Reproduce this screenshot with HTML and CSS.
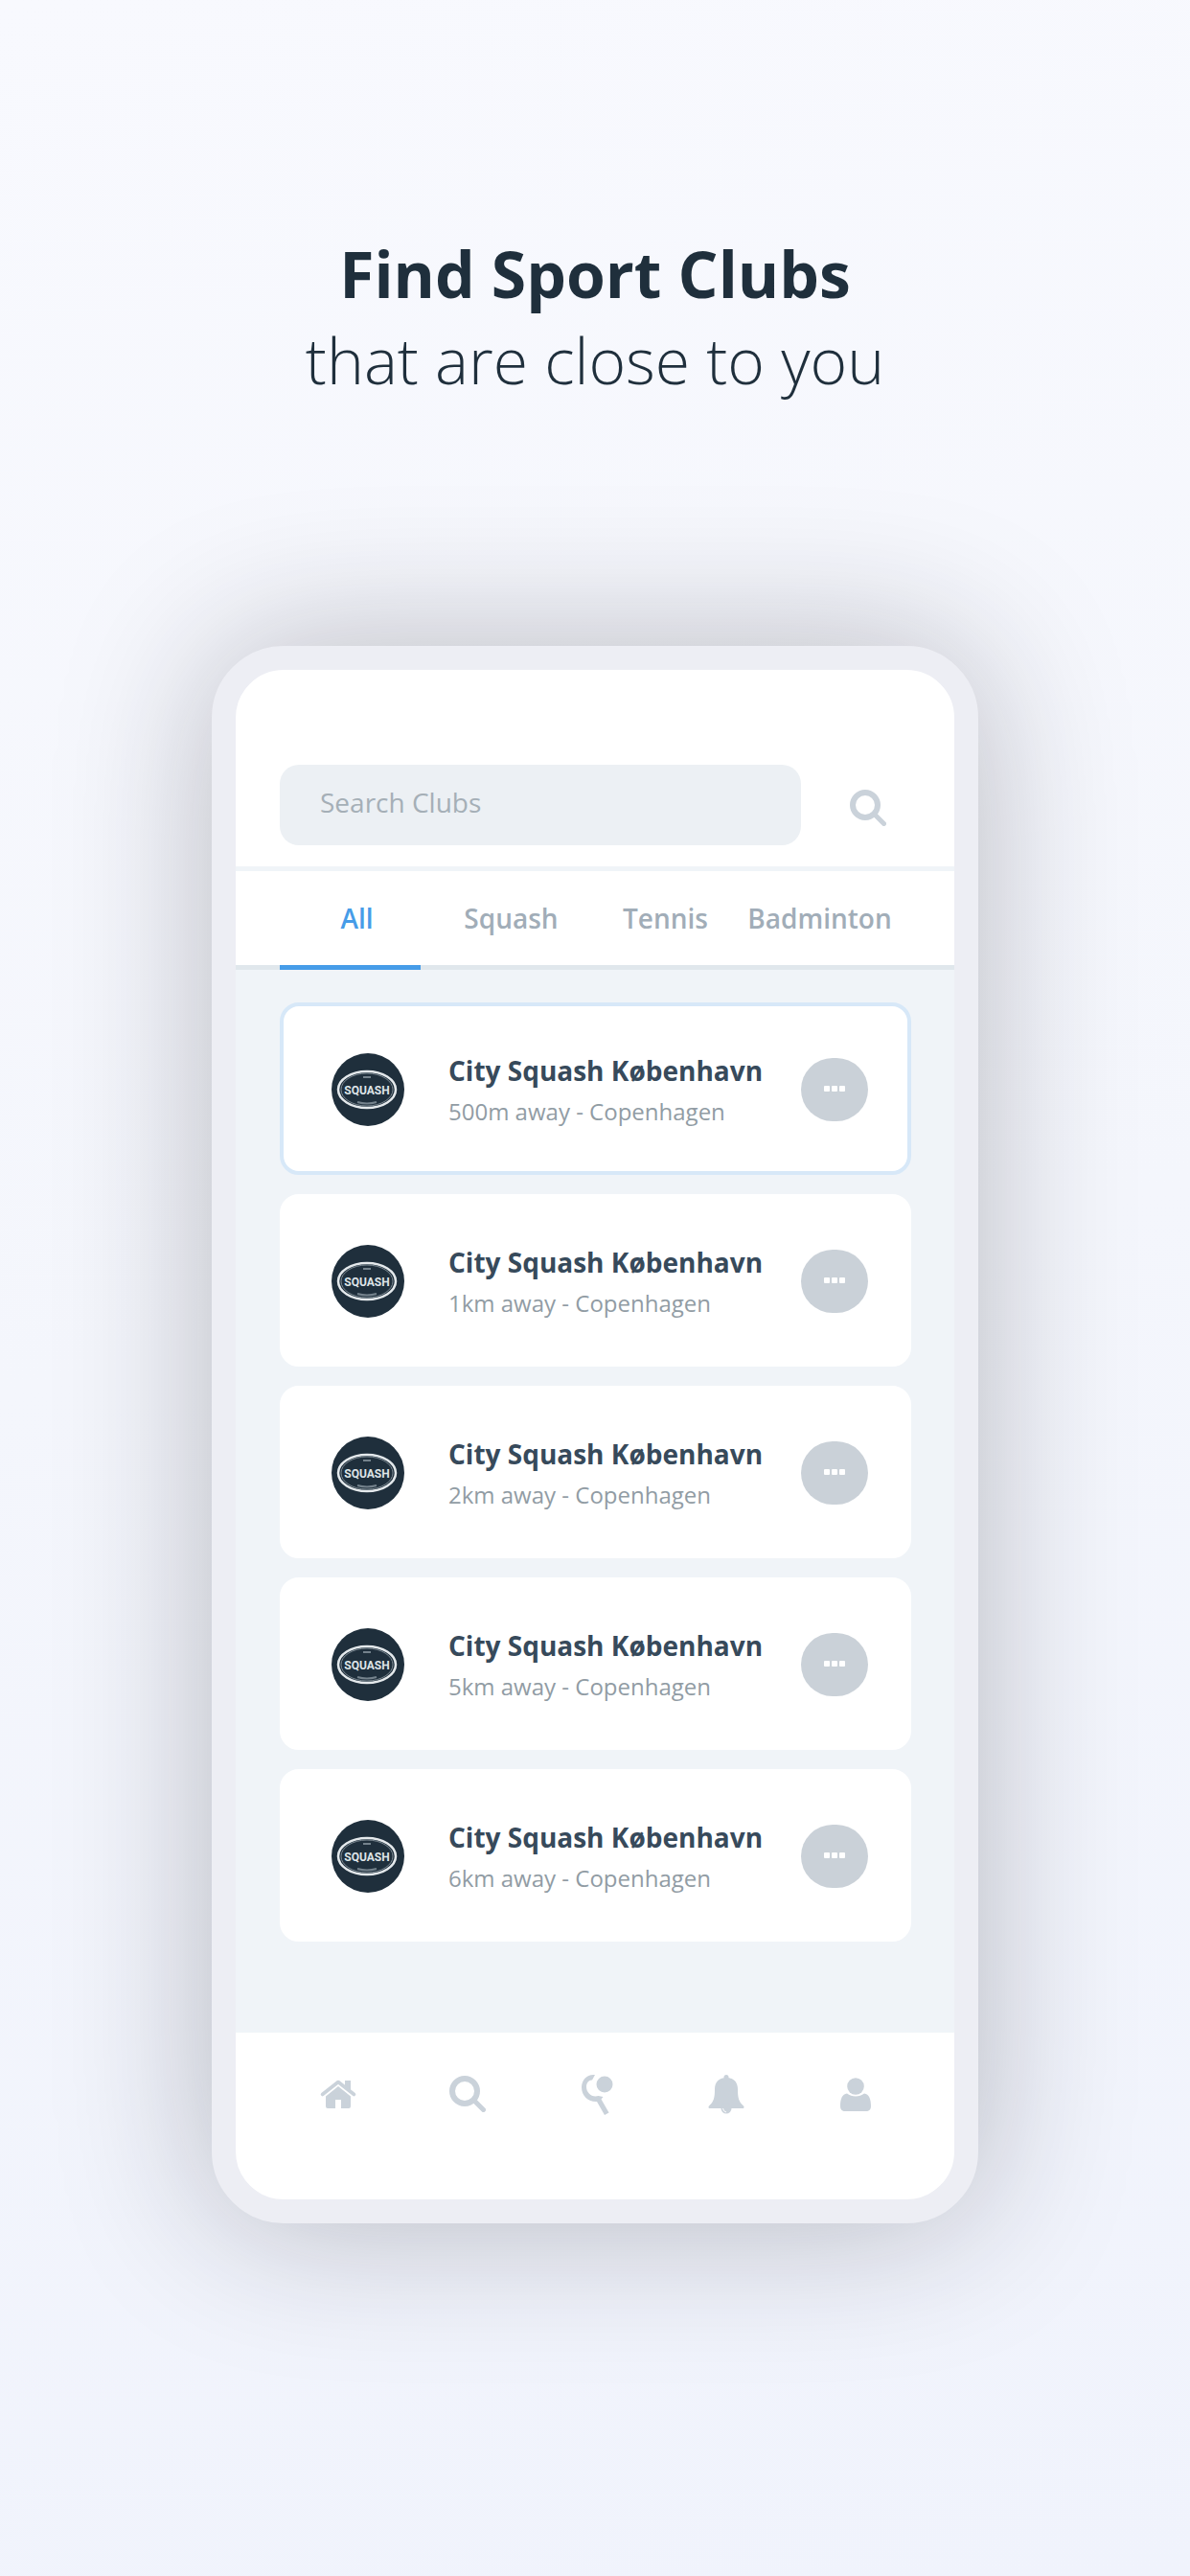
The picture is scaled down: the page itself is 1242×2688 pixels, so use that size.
FILE: index.html
```html
<!DOCTYPE html>
<html lang="en">
  <head>
    <meta charset="utf-8">
    <meta name="viewport" content="width=device-width, initial-scale=1">
    <title>Find Sport Clubs</title>
    <link rel="stylesheet" href="styles.css">
  </head>
  <body>
    <!-- Shared icons -->
    <svg class="sprite" aria-hidden="true">
      <symbol id="icon-search" viewBox="0 0 38 38">
        <circle cx="16" cy="16" r="13" fill="none" stroke="currentColor" stroke-width="6" />
        <path d="M26 26l9.500 9.500" fill="none" stroke="currentColor" stroke-width="5" stroke-linecap="round" />
      </symbol>
      <symbol id="logo-squash" viewBox="0 0 76 76">
        <circle cx="38" cy="38" r="38" fill="#1f2f3c" />
        <ellipse cx="37" cy="38" rx="30" ry="19" fill="none" stroke="#e4e9ec" stroke-width="2.500" />
        <ellipse cx="37" cy="38" rx="27" ry="17" fill="none" stroke="#7d8a93" stroke-width="1" />
        <path d="M33 25h8M27 51q10 3 20 0" fill="none" stroke="#74828c" stroke-width="2" />
        <text x="37" y="43" class="logo-text">SQUASH</text>
      </symbol>
    </svg>

    <div class="headline">
      <h1>Find Sport Clubs</h1>
      <p>that are close to you</p>
    </div>

    <div class="phone">
      <form class="search-bar">
        <input type="text" class="search-input" placeholder="Search Clubs" aria-label="Search Clubs">
        <button type="button" class="search-btn" aria-label="Search">
          <svg class="icon"><use href="#icon-search" /></svg>
        </button>
      </form>

      <div class="tabs">
        <button type="button" class="tab active">All</button>
        <button type="button" class="tab">Squash</button>
        <button type="button" class="tab">Tennis</button>
        <button type="button" class="tab">Badminton</button>
      </div>

      <ul class="club-list">
        <li class="club selected">
          <svg class="club-logo" aria-hidden="true"><use href="#logo-squash" /></svg>
          <div class="club-info">
            <h2>City Squash København</h2>
            <p>500m away - Copenhagen</p>
          </div>
          <button type="button" class="more-btn" aria-label="More"><i></i><i></i><i></i></button>
        </li>
        <li class="club">
          <svg class="club-logo" aria-hidden="true"><use href="#logo-squash" /></svg>
          <div class="club-info">
            <h2>City Squash København</h2>
            <p>1km away - Copenhagen</p>
          </div>
          <button type="button" class="more-btn" aria-label="More"><i></i><i></i><i></i></button>
        </li>
        <li class="club">
          <svg class="club-logo" aria-hidden="true"><use href="#logo-squash" /></svg>
          <div class="club-info">
            <h2>City Squash København</h2>
            <p>2km away - Copenhagen</p>
          </div>
          <button type="button" class="more-btn" aria-label="More"><i></i><i></i><i></i></button>
        </li>
        <li class="club">
          <svg class="club-logo" aria-hidden="true"><use href="#logo-squash" /></svg>
          <div class="club-info">
            <h2>City Squash København</h2>
            <p>5km away - Copenhagen</p>
          </div>
          <button type="button" class="more-btn" aria-label="More"><i></i><i></i><i></i></button>
        </li>
        <li class="club">
          <svg class="club-logo" aria-hidden="true"><use href="#logo-squash" /></svg>
          <div class="club-info">
            <h2>City Squash København</h2>
            <p>6km away - Copenhagen</p>
          </div>
          <button type="button" class="more-btn" aria-label="More"><i></i><i></i><i></i></button>
        </li>
      </ul>

      <nav class="bottom-nav">
        <a href="#home" aria-label="Home">
          <svg class="nav-icon" viewBox="0 0 44 44">
            <path d="M5.500 22.500L22 9.500l16.500 13" fill="none" stroke="currentColor" stroke-width="3.600" stroke-linecap="round" stroke-linejoin="round" />
            <path d="M29 8h6v12l-6-5z" fill="currentColor" />
            <path d="M22 14l13 10.500V35q0 2-2 2h-8v-9h-6v9h-8q-2 0-2-2V24.500z" fill="currentColor" />
          </svg>
        </a>
        <a href="#search" aria-label="Search">
          <svg class="icon"><use href="#icon-search" /></svg>
        </a>
        <a href="#play" aria-label="Play">
          <svg class="nav-icon" viewBox="0 0 44 44">
            <circle cx="30" cy="12" r="8.500" fill="currentColor" />
            <path d="M20 2C12 1 6 7 6 15c0 9 7 15 15 15h1l8 14 4.500-2.500L26.500 27.500l2-2.500-5-1C17 26 11 21 11 14.500 11 10 14 7 17 7.500z" fill="currentColor" />
          </svg>
        </a>
        <a href="#alerts" aria-label="Notifications">
          <svg class="nav-icon" viewBox="0 0 44 44">
            <circle cx="22" cy="4.500" r="2.500" fill="currentColor" />
            <path d="M22 5c7 0 12 4 12 12 0 9 1 13 6 17.500 1 1 .5 2.500-1 2.500H5c-1.500 0-2-1.500-1-2.500C9 30 10 26 10 17 10 9 15 5 22 5z" fill="currentColor" />
            <circle cx="22" cy="37" r="5.500" fill="currentColor" />
            <path d="M18.500 37q.5 3.500 3.500 4" fill="none" stroke="#fff" stroke-width="1" />
          </svg>
        </a>
        <a href="#profile" aria-label="Profile">
          <svg class="nav-icon" viewBox="0 0 44 44">
            <circle cx="22" cy="14" r="8.800" fill="currentColor" />
            <path d="M13 21.500c5 4 13 4 18 0 5 .5 7 6 7 13 0 4-2 5.500-5 5.500H11c-3 0-5-1.500-5-5.500 0-7 2-12.500 7-13z" fill="currentColor" />
          </svg>
        </a>
      </nav>
    </div>
  </body>
</html>
```
FILE: styles.css
```css
* {
  box-sizing: border-box;
}
body {
  margin: 0;
  min-height: 100vh;
  padding: 240px 20px;
  font-family: "Open Sans", "Noto Sans", sans-serif;
  background: linear-gradient(170deg, #f8f9fe 0%, #f4f6fc 50%, #f0f3fc 100%);
  color: #1f2f3c;
}
h1,
h2,
p,
ul {
  margin: 0;
  padding: 0;
}
button {
  border: none;
  padding: 0;
  background: none;
  font-family: inherit;
  cursor: pointer;
}
.sprite {
  display: none;
}
.headline {
  text-align: center;
  font-size: 66px;
  line-height: 90px;
  margin-bottom: 254px;
}
.headline h1 {
  font-size: inherit;
  font-weight: 700;
}
.headline p {
  font-weight: 300;
}

/* Phone frame */
.phone {
  max-width: 800px;
  margin: 0 auto;
  border: 25px solid #edeef4;
  border-radius: 75px;
  background: #fff;
  box-shadow: 0 0 160px rgba(25, 25, 35, 0.28);
}
.search-bar {
  display: flex;
  padding: 99px 20px 22px 46px;
  border-bottom: 5px solid #f0f4f8;
}
.search-input {
  flex: 1;
  min-width: 0;
  height: 84px;
  padding: 0 42px 6px;
  border: none;
  border-radius: 20px;
  background: #ecf0f4;
  font-family: inherit;
  font-size: 28px;
  color: #3a4d5e;
}
.search-input::placeholder {
  color: #a5afb7;
  opacity: 1;
}
.search-btn {
  display: flex;
  align-items: center;
  justify-content: center;
  width: 140px;
  padding-top: 6px;
  color: #cad2da;
}
.icon {
  width: 38px;
  height: 38px;
}

/* Sport tabs */
.tabs {
  display: grid;
  grid-template-columns: repeat(4, 1fr);
  padding: 0 60px 0 46px;
  border-bottom: 5px solid #e0e7ec;
}
.tab {
  position: relative;
  padding: 30px 0;
  font-size: 28px;
  font-weight: 600;
  line-height: 38px;
  color: #a1adb8;
}
.tab.active {
  color: #469ce8;
}
.tab.active::after {
  content: "";
  position: absolute;
  left: 0;
  right: 14px;
  bottom: -5px;
  height: 5px;
  background: #469ce8;
}

/* Club cards */
.club-list {
  display: flex;
  flex-direction: column;
  gap: 20px;
  padding: 34px 45px 95px 46px;
  list-style: none;
  background: #f0f4f8;
}
.club {
  display: flex;
  align-items: center;
  height: 180px;
  padding: 2px 41px 0 50px;
  border: 4px solid #fff;
  border-radius: 20px;
  background: #fff;
}
.club.selected {
  border-color: #d7e8f8;
}
.club-logo {
  flex-shrink: 0;
  width: 76px;
  height: 76px;
  margin-right: 46px;
}
.logo-text {
  font-family: Roboto, "Open Sans", sans-serif;
  font-size: 12px;
  font-weight: 700;
  text-anchor: middle;
  fill: #dfe5e8;
}
.club-info {
  flex: 1;
}
.club-info h2 {
  margin-bottom: 8px;
  font-size: 28px;
  font-weight: 700;
  line-height: 38px;
  color: #374a5b;
}
.club-info p {
  font-size: 24px;
  line-height: 32px;
  color: #919ca4;
}
.more-btn {
  display: flex;
  align-items: center;
  justify-content: center;
  gap: 2px;
  width: 70px;
  height: 66px;
  padding-bottom: 2px;
  border-radius: 33px;
  background: #cad1d8;
}
.more-btn i {
  width: 6px;
  height: 6px;
  border-radius: 1px;
  background: #fff;
}

/* Bottom navigation */
.bottom-nav {
  display: flex;
  height: 174px;
  padding: 40px 36px 0 40px;
}
.bottom-nav a {
  display: flex;
  flex: 1;
  align-items: center;
  justify-content: center;
  height: 48px;
  color: #cad2da;
}
.nav-icon {
  width: 44px;
  height: 44px;
}
```
